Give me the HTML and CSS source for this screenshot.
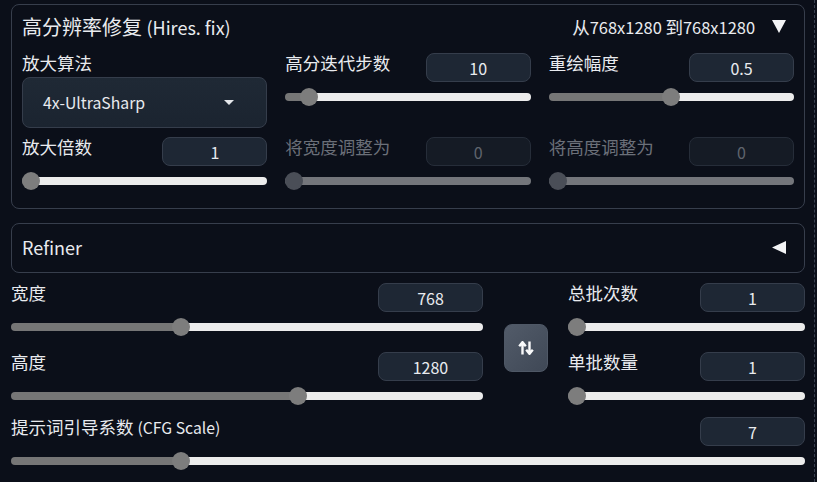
FILE: index.html
```html
<!DOCTYPE html>
<html lang="zh-CN">
<head>
    <meta charset="UTF-8">
    <meta name="viewport" content="width=device-width, initial-scale=1.0">
    <title>txt2img settings</title>
    <link rel="stylesheet" href="styles.css">
</head>
<body>
    <div class="page">
        <section class="panel">
            <div class="panel-head">
                <span class="panel-title">高分辨率修复 <span class="en">(Hires. fix)</span></span>
                <span class="panel-info">从<span class="en">768x1280 </span>到<span class="en">768x1280</span></span>
                <svg class="toggle" width="14" height="13" viewBox="0 0 14 13"><path d="M0 0h14L7 13z" fill="#f3f4f6"/></svg>
            </div>
            <div class="hires-grid">
                <div class="field">
                    <label class="field-label">放大算法</label>
                    <div class="dropdown">
                        <span>4x-UltraSharp</span>
                        <svg width="10" height="5" viewBox="0 0 10 5"><path d="M0 0h10L5 5z" fill="#e5e7eb"/></svg>
                    </div>
                </div>
                <div class="field">
                    <div class="field-top">
                        <label class="field-label">高分迭代步数</label>
                        <input class="num" type="number" value="10">
                    </div>
                    <input class="slider" type="range" min="0" max="150" value="10" style="--v:0.0667">
                </div>
                <div class="field">
                    <div class="field-top">
                        <label class="field-label">重绘幅度</label>
                        <input class="num" type="number" value="0.5">
                    </div>
                    <input class="slider" type="range" min="0" max="1" step="0.01" value="0.5" style="--v:0.5">
                </div>
                <div class="field">
                    <div class="field-top">
                        <label class="field-label">放大倍数</label>
                        <input class="num" type="number" value="1">
                    </div>
                    <input class="slider" type="range" min="1" max="4" step="0.05" value="1" style="--v:0">
                </div>
                <div class="field is-disabled">
                    <div class="field-top">
                        <label class="field-label">将宽度调整为</label>
                        <input class="num" type="number" value="0" disabled>
                    </div>
                    <input class="slider" type="range" min="0" max="2048" value="0" disabled style="--v:0">
                </div>
                <div class="field is-disabled">
                    <div class="field-top">
                        <label class="field-label">将高度调整为</label>
                        <input class="num" type="number" value="0" disabled>
                    </div>
                    <input class="slider" type="range" min="0" max="2048" value="0" disabled style="--v:0">
                </div>
            </div>
        </section>

        <section class="panel refiner">
            <div class="panel-head">
                <span class="panel-title">Refiner</span>
                <svg class="toggle" width="14" height="13" viewBox="0 0 14 13"><path d="M14 0v13L0 6.5z" fill="#f3f4f6"/></svg>
            </div>
        </section>

        <div class="dims">
            <div class="dims-col">
                <div class="field">
                    <div class="field-top">
                        <label class="field-label">宽度</label>
                        <input class="num" type="number" value="768">
                    </div>
                    <input class="slider" type="range" min="64" max="2048" step="8" value="768" style="--v:0.3548">
                </div>
                <div class="field">
                    <div class="field-top">
                        <label class="field-label">高度</label>
                        <input class="num" type="number" value="1280">
                    </div>
                    <input class="slider" type="range" min="64" max="2048" step="8" value="1280" style="--v:0.6129">
                </div>
            </div>
            <button class="swap" title="Switch width/height">
                <svg width="16" height="14" viewBox="0 0 16 14"><path d="M4.5 13.5V2M1.2 5.2L4.5 1.2l3.3 4M11.5 0.5V12M8.2 8.8l3.3 4 3.3-4" stroke="#f9fafb" stroke-width="2.4" fill="none"/></svg>
            </button>
            <div class="dims-col batch">
                <div class="field">
                    <div class="field-top">
                        <label class="field-label">总批次数</label>
                        <input class="num" type="number" value="1">
                    </div>
                    <input class="slider" type="range" min="1" max="100" value="1" style="--v:0">
                </div>
                <div class="field">
                    <div class="field-top">
                        <label class="field-label">单批数量</label>
                        <input class="num" type="number" value="1">
                    </div>
                    <input class="slider" type="range" min="1" max="8" value="1" style="--v:0">
                </div>
            </div>
        </div>

        <div class="field cfg">
            <div class="field-top">
                <label class="field-label">提示词引导系数 <span class="en">(CFG Scale)</span></label>
                <input class="num" type="number" value="7">
            </div>
            <input class="slider" type="range" min="1" max="30" step="0.5" value="7" style="--v:0.2069">
        </div>
    </div>
</body>
</html>
```

FILE: styles.css
```css
body {
    margin: 0;
    background-color: #0b0f19;
    color: #e9ebef;
    font-family: "Noto Sans CJK SC", "Noto Sans", sans-serif;
    font-size: 17.5px;
    overflow: hidden;
}
.en {
    font-size: 0.9em;
}
.page {
    width: 815px;
    height: 482px;
    box-sizing: border-box;
    padding: 4px 9px 0 11px;
    border-right: 1px dashed #3a4150;
}
.panel {
    border: 1px solid #373e4c;
    border-radius: 8px;
    padding: 0 10px 18px;
}
.panel-head {
    display: flex;
    align-items: center;
    height: 46px;
    box-sizing: border-box;
    padding-bottom: 4px;
}
.panel-title {
    font-size: 20px;
    flex: 1;
}
.panel-info {
    font-size: 17.5px;
    margin-right: 17px;
}
.panel-info .en {
    font-size: 0.94em;
}
.toggle {
    margin-right: 8px;
}
.hires-grid {
    display: grid;
    grid-template-columns: repeat(3, 1fr);
    column-gap: 18px;
    row-gap: 9px;
    margin-top: 2px;
}
.field-top {
    display: flex;
    justify-content: space-between;
    align-items: flex-start;
    height: 29px;
}
.field-label {
    display: block;
    line-height: 24px;
    margin-top: -2px;
}
.hires-grid > .field > .field-label {
    margin-bottom: 2px;
}
.is-disabled .field-label {
    color: #6b7079;
}
.num {
    width: 105px;
    height: 29px;
    box-sizing: border-box;
    border: 1px solid #353d4b;
    border-radius: 8px;
    background-color: #1e2734;
    color: #e9ebef;
    font: inherit;
    font-size: 16px;
    text-align: center;
    padding: 0;
    -moz-appearance: textfield;
}
.num::-webkit-inner-spin-button,
.num::-webkit-outer-spin-button {
    -webkit-appearance: none;
    margin: 0;
}
.num:disabled {
    background-color: #151b25;
    border-color: #262d39;
    color: #5f646d;
}
.dropdown {
    display: flex;
    align-items: center;
    justify-content: space-between;
    height: 51px;
    box-sizing: border-box;
    border: 1px solid #353d4b;
    border-radius: 8px;
    background: linear-gradient(180deg, #1f2935, #1b2430);
    padding: 0 32px 0 20px;
    font-size: 15.8px;
}
.slider {
    -webkit-appearance: none;
    appearance: none;
    display: block;
    width: 100%;
    height: 18px;
    margin: 6px 0 0;
    background: transparent;
}
.slider::-webkit-slider-runnable-track {
    height: 8px;
    border-radius: 4px;
    background: linear-gradient(to right, #767676 calc(9px + (100% - 18px) * var(--v)), #ececec 0);
}
.slider::-webkit-slider-thumb {
    -webkit-appearance: none;
    width: 18px;
    height: 18px;
    margin-top: -5px;
    border: none;
    border-radius: 50%;
    background-color: #7d7d7d;
}
.slider:disabled::-webkit-slider-runnable-track {
    background: #74767b;
}
.slider:disabled::-webkit-slider-thumb {
    background-color: #4a4e57;
}
.refiner {
    margin-top: 14px;
    padding-bottom: 2px;
}
.refiner .panel-head {
    padding-bottom: 0;
}
.refiner .panel-title {
    font-size: 18px;
}
.dims {
    display: flex;
    margin-top: 10px;
}
.dims-col {
    flex: 1;
    display: flex;
    flex-direction: column;
    gap: 16px;
}
.dims-col.batch {
    flex: 0 0 237px;
}
.swap {
    align-self: center;
    width: 44px;
    height: 48px;
    margin: 8px 20px 0 21px;
    border: 1px solid #4f5866;
    border-radius: 8px;
    background: linear-gradient(135deg, #525b69, #3f4856);
    display: flex;
    align-items: center;
    justify-content: center;
    padding: 0;
}
.cfg {
    margin-top: 12px;
}
```
